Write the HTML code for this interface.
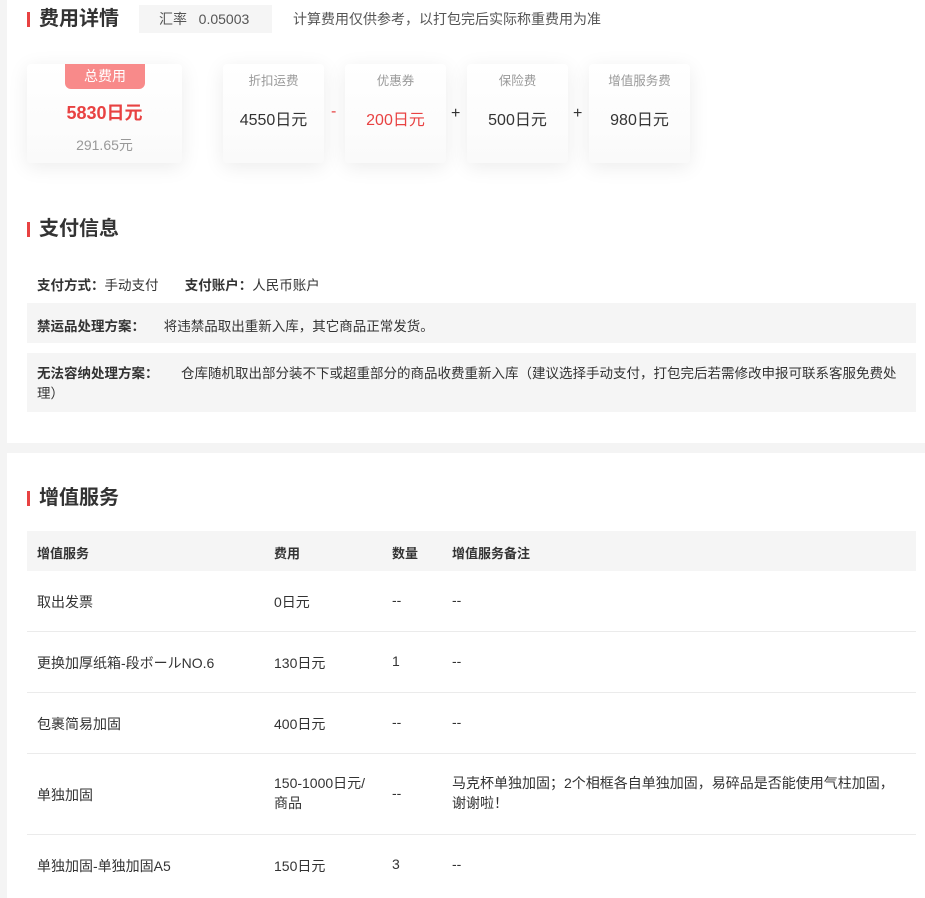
<!DOCTYPE html>
<html><head><meta charset="utf-8"><style>
*{margin:0;padding:0;box-sizing:border-box}
body{width:925px;height:898px;overflow:hidden;background:#f4f4f4;font-family:"Liberation Sans","Noto Sans CJK SC",sans-serif;color:#333;font-size:14px;position:relative}
.card{position:absolute;left:7px;right:0;background:#fff}
.a{position:absolute;white-space:nowrap}
.t{font-size:20px;font-weight:bold;color:#333;padding-left:12px;line-height:22px}
.t:before{content:"";position:absolute;left:0;top:4px;width:3px;height:15px;background:#e84242}
.box{position:absolute;top:64px;height:99px;background:linear-gradient(#fff,#fafafa);border-radius:4px;box-shadow:0 4px 20px rgba(0,0,0,.08);text-align:center}
.box .l{position:absolute;top:6px;left:0;right:0;font-size:12.5px;color:#999}
.box .v{position:absolute;top:42px;left:0;right:0;font-size:16px;color:#333}
.op{position:absolute;top:106px;font-size:16px;color:#333}
.g{position:absolute;left:27px;width:889px;background:#f5f5f5}
b{font-weight:bold;color:#333}
.line{position:absolute;left:27px;width:889px;height:1px;background:#ebebeb}
</style></head><body>
<div class="card" style="top:0;height:443px"></div>
<div class="card" style="top:453px;height:445px"></div>

<div class="a t" style="left:27px;top:8px">费用详情</div>
<div class="a" style="left:139px;top:5px;width:133px;height:28px;background:#f5f5f5;color:#555;line-height:28px;padding-left:20px">汇率&nbsp;&nbsp;&nbsp;0.05003</div>
<div class="a" style="left:293px;top:10px;color:#555;line-height:18px">计算费用仅供参考，以打包完后实际称重费用为准</div>

<div class="box" style="left:27px;width:155px">
<div style="position:absolute;left:38px;top:0;width:80px;height:25px;background:#f88a8a;border-radius:0 0 6px 6px;color:#fff;font-size:14px;line-height:24px">总费用</div>
<div style="position:absolute;top:35px;left:0;right:0;font-size:18px;font-weight:bold;color:#e84242">5830日元</div>
<div style="position:absolute;top:71px;left:0;right:0;font-size:14px;color:#999">291.65元</div>
</div>
<div class="box" style="left:223px;width:101px"><div class="l">折扣运费</div><div class="v">4550日元</div></div>
<div class="op" style="left:331px;color:#e84242;top:103px">-</div>
<div class="box" style="left:345px;width:101px"><div class="l">优惠券</div><div class="v" style="color:#e84242">200日元</div></div>
<div class="op" style="left:451px;top:105px">+</div>
<div class="box" style="left:467px;width:101px"><div class="l">保险费</div><div class="v">500日元</div></div>
<div class="op" style="left:573px;top:105px">+</div>
<div class="box" style="left:589px;width:101px"><div class="l">增值服务费</div><div class="v">980日元</div></div>

<div class="a t" style="left:27px;top:218px">支付信息</div>
<div class="a" style="left:37px;top:274px;font-size:13.5px"><b>支付方式：</b>手动支付&nbsp;&nbsp;&nbsp;&nbsp;&nbsp;&nbsp;&nbsp;<b>支付账户：</b>人民币账户</div>
<div class="g" style="top:303px;height:40px"><div class="a" style="left:10px;top:12px;font-size:13.5px"><b>禁运品处理方案：</b>&nbsp;&nbsp;&nbsp;&nbsp;&nbsp;将违禁品取出重新入库，其它商品正常发货。</div></div>
<div class="g" style="top:353px;height:59px"><div style="position:absolute;left:10px;top:11px;width:870px;line-height:20px;font-size:13.5px"><b>无法容纳处理方案：</b>&nbsp;&nbsp;&nbsp;&nbsp;&nbsp;&nbsp;仓库随机取出部分装不下或超重部分的商品收费重新入库（建议选择手动支付，打包完后若需修改申报可联系客服免费处理）</div></div>

<div class="a t" style="left:27px;top:487px">增值服务</div>
<div class="g" style="top:531px;height:40px"></div>
<div class="a" style="left:37px;top:543px;font-size:13px"><b>增值服务</b></div>
<div class="a" style="left:274px;top:543px;font-size:13px"><b>费用</b></div>
<div class="a" style="left:392px;top:543px;font-size:13px"><b>数量</b></div>
<div class="a" style="left:452px;top:543px;font-size:13px"><b>增值服务备注</b></div>

<div class="a" style="left:37px;top:592px">取出发票</div><div class="a" style="left:274px;top:592px">0日元</div><div class="a" style="left:392px;top:592px">--</div><div class="a" style="left:452px;top:592px">--</div>
<div class="line" style="top:631px"></div>
<div class="a" style="left:37px;top:653px">更换加厚纸箱-段ボールNO.6</div><div class="a" style="left:274px;top:653px">130日元</div><div class="a" style="left:392px;top:653px">1</div><div class="a" style="left:452px;top:653px">--</div>
<div class="line" style="top:692px"></div>
<div class="a" style="left:37px;top:714px">包裹简易加固</div><div class="a" style="left:274px;top:714px">400日元</div><div class="a" style="left:392px;top:714px">--</div><div class="a" style="left:452px;top:714px">--</div>
<div class="line" style="top:753px"></div>
<div class="a" style="left:37px;top:785px">单独加固</div><div class="a" style="left:274px;top:773px;line-height:20px;white-space:normal;width:105px">150-1000日元/<br>商品</div><div class="a" style="left:392px;top:785px">--</div><div class="a" style="left:452px;top:773px;line-height:20px;white-space:normal;width:445px">马克杯单独加固；2个相框各自单独加固，易碎品是否能使用气柱加固，<br>谢谢啦！</div>
<div class="line" style="top:834px"></div>
<div class="a" style="left:37px;top:856px">单独加固-单独加固A5</div><div class="a" style="left:274px;top:856px">150日元</div><div class="a" style="left:392px;top:856px">3</div><div class="a" style="left:452px;top:856px">--</div>
</body></html>
